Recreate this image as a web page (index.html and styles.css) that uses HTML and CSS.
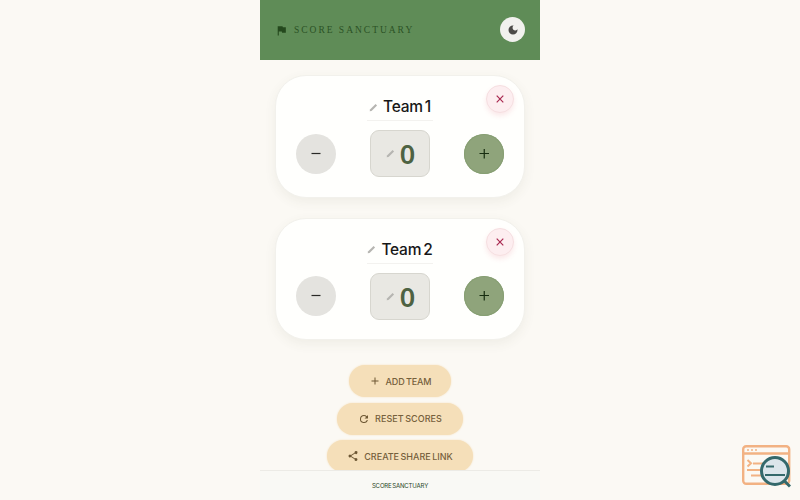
FILE: index.html
```
<!DOCTYPE html>
<html lang="en">
<head>
    <meta charset="UTF-8">
    <meta name="viewport" content="width=device-width, initial-scale=1.0">
    <title>Score Sanctuary</title>
    <link rel="stylesheet" href="styles.css">
</head>
<body>
<div class="app">
    <header class="header">
        <h1 class="brand">
            <svg class="brand-icon" viewBox="0 0 24 24"><path d="M14.4 6L14 4H5v17h2v-7h5.6l.4 2h7V6z"/></svg>
            <span>SCORE SANCTUARY</span>
        </h1>
        <button class="theme-toggle" aria-label="Dark mode">
            <svg viewBox="0 0 24 24"><path d="M12 3a9 9 0 1 0 9 9c0-.46-.04-.92-.1-1.36A5.4 5.4 0 1 1 13.360 3.100C12.920 3.040 12.460 3 12 3z"/></svg>
        </button>
    </header>

    <main class="main">
        <section class="card">
            <button class="remove" aria-label="Remove team">
                <svg viewBox="0 0 10 10"><path d="M1.700 1.700l6.600 6.600M8.300 1.700l-6.600 6.600"/></svg>
            </button>
            <div class="team">
                <svg class="pencil" viewBox="0 0 10 10"><path d="M.8 9.200l.3-2L7.300 1 9 2.700 2.800 8.900z"/></svg>
                <span>Team 1</span>
            </div>
            <div class="row">
                <button class="round minus" aria-label="Minus"><svg viewBox="0 0 12 12"><path d="M1.500 5.500h9"/></svg></button>
                <div class="score">
                    <svg class="pencil" viewBox="0 0 10 10"><path d="M.8 9.200l.3-2L7.300 1 9 2.700 2.800 8.900z"/></svg>
                    <span>0</span>
                </div>
                <button class="round plus" aria-label="Plus"><svg viewBox="0 0 12 12"><path d="M1.500 5.500h9.500M6.250 1v9.500"/></svg></button>
            </div>
        </section>

        <section class="card">
            <button class="remove" aria-label="Remove team">
                <svg viewBox="0 0 10 10"><path d="M1.700 1.700l6.600 6.600M8.300 1.700l-6.600 6.600"/></svg>
            </button>
            <div class="team">
                <svg class="pencil" viewBox="0 0 10 10"><path d="M.8 9.200l.3-2L7.300 1 9 2.700 2.800 8.900z"/></svg>
                <span>Team 2</span>
            </div>
            <div class="row">
                <button class="round minus" aria-label="Minus"><svg viewBox="0 0 12 12"><path d="M1.500 5.500h9"/></svg></button>
                <div class="score">
                    <svg class="pencil" viewBox="0 0 10 10"><path d="M.8 9.200l.3-2L7.300 1 9 2.700 2.800 8.900z"/></svg>
                    <span>0</span>
                </div>
                <button class="round plus" aria-label="Plus"><svg viewBox="0 0 12 12"><path d="M1.500 5.500h9.500M6.250 1v9.500"/></svg></button>
            </div>
        </section>

        <div class="actions">
            <button class="action add">
                <svg viewBox="0 0 24 24"><path d="M19 13h-6v6h-2v-6H5v-2h6V5h2v6h6z"/></svg>
                <span>ADD TEAM</span>
            </button>
            <button class="action reset">
                <svg viewBox="0 0 24 24"><path d="M17.650 6.350A7.960 7.960 0 0 0 12 4a8 8 0 1 0 7.730 10h-2.080A6 6 0 1 1 12 6c1.660 0 3.140.69 4.220 1.780L13 11h7V4z"/></svg>
                <span>RESET SCORES</span>
            </button>
            <button class="action share">
                <svg viewBox="0 0 24 24"><path d="M18 16.100c-.76 0-1.440.3-1.960.77L8.900 12.700a3.300 3.300 0 0 0 0-1.400l7.050-4.110A3 3 0 1 0 15 5c0 .24.040.47.090.7L8.040 9.810a3 3 0 1 0 0 4.380l7.120 4.160A2.920 2.920 0 1 0 18 16.100z"/></svg>
                <span>CREATE SHARE LINK</span>
            </button>
        </div>
    </main>

    <footer class="footer"><span>SCORE SANCTUARY</span></footer>
</div>

<!-- inspector badge -->
<svg class="badge" viewBox="0 0 50 44">
    <g fill="none" stroke="#f2b283" stroke-width="2.400">
        <rect x="2.200" y="2.200" width="46" height="37.500" rx="3"/>
        <path d="M2 9.500h46"/>
        <path d="M6 6h2M10 6h2M14 6h2" stroke-width="1.600"/>
        <path d="M6.500 16l3.500 3.200-3.500 3.200M12 19.500h10M6 26h14M10 31.500h11" stroke-width="2"/>
    </g>
    <circle cx="34" cy="27" r="13.500" fill="#dce6eb" stroke="#34696b" stroke-width="3"/>
    <path d="M25 22.500h8M24 31h20" stroke="#34696b" stroke-width="2.200"/>
    <path d="M43 36.500l6 6" stroke="#34696b" stroke-width="3"/>
</svg>
</body>
</html>
```
FILE: styles.css
```
* { box-sizing: border-box; }
body {
    margin: 0;
    height: 500px;
    overflow: hidden;
    background: #fbf9f4;
    font-family: Inter, "Open Sans", sans-serif;
    color: #171717;
}
button { border: 0; padding: 0; font: inherit; color: inherit; }
svg { display: block; flex: none; }

.app {
    width: 280px;
    height: 500px;
    margin: 0 auto;
    display: flex;
    flex-direction: column;
}

/* header */
.header {
    flex: none;
    height: 60px;
    padding: 0 15px 0 15px;
    display: flex;
    align-items: center;
    justify-content: space-between;
    background: #5f8c57;
}
.brand {
    margin: 0;
    display: flex;
    align-items: center;
    gap: 6px;
    font: 400 9.5px/12px "Liberation Serif", serif;
    letter-spacing: 1.98px;
    white-space: nowrap;
    color: #2b5225;
}
.brand-icon { width: 13px; height: 13px; fill: #24481d; }
.theme-toggle {
    width: 25px;
    height: 25px;
    margin-bottom: 1px;
    border-radius: 50%;
    background: #f1f1ee;
    display: flex;
    align-items: center;
    justify-content: center;
}
.theme-toggle svg { width: 12px; height: 12px; fill: #4b4a48; }

/* team cards */
.main {
    flex: 1;
    min-height: 0;
    overflow: hidden;
    padding: 15px 15px 0;
}
.card {
    position: relative;
    height: 122.5px;
    margin-bottom: 20px;
    padding: 20px 20px 0;
    border: 1px solid #f2f1ec;
    border-radius: 31px;
    background: #fffffd;
    box-shadow: 0 4px 12px rgba(90, 85, 50, .07);
}
.remove {
    position: absolute;
    top: 9px;
    right: 10px;
    width: 28px;
    height: 28px;
    border: 1px solid #f6dfe1;
    border-radius: 50%;
    background: #fdeef0;
    box-shadow: 0 3px 5px rgba(230, 100, 120, .14);
    display: flex;
    align-items: center;
    justify-content: center;
}
.remove svg { width: 10px; height: 10px; fill: none; stroke: #a92850; stroke-width: 1.2; }
.team {
    width: 66px;
    height: 25px;
    margin: 0 auto 9px;
    padding-bottom: 2px;
    border-bottom: 1px solid #f3f2ef;
    display: flex;
    align-items: center;
    justify-content: center;
    gap: 5px;
    font-size: 15.5px;
    font-weight: 500;
    line-height: 20px;
    letter-spacing: -.25px;
    word-spacing: -1.8px;
    white-space: nowrap;
}
.pencil { width: 9px; height: 9px; fill: #b6b5b1; }
.row {
    display: flex;
    align-items: center;
    justify-content: space-between;
}
.round {
    width: 40px;
    height: 40px;
    border-radius: 50%;
    display: flex;
    align-items: center;
    justify-content: center;
}
.round svg { width: 12px; height: 12px; fill: none; stroke-width: 1.2; }
.minus { background: #e4e3df; }
.minus svg { stroke: #292926; }
.plus { background: #8fa47b; box-shadow: inset 0 0 0 1px #879f73; }
.plus svg { stroke: #172d10; }
.score {
    width: 60px;
    height: 47px;
    padding-left: 1px;
    border: 1px solid #d7d6cf;
    border-radius: 9px;
    background: #e9e8e3;
    display: flex;
    align-items: center;
    justify-content: center;
    gap: 5px;
    font: 600 27px/45px "Noto Sans", sans-serif;
    color: #4e6242;
}

/* action buttons */
.actions {
    padding-top: 5px;
    display: flex;
    flex-direction: column;
    align-items: center;
    gap: 5.5px;
}
.action {
    height: 32px;
    border-radius: 16px;
    background: #f5dfb9;
    box-shadow: 0 0 2px #f5dfb9;
    display: flex;
    align-items: center;
    justify-content: center;
    gap: 5px;
    font-size: 9px;
    font-weight: 500;
    word-spacing: -.9px;
    white-space: nowrap;
    color: #75603c;
}
.action svg { width: 12px; height: 12px; fill: #6d5733; }
.add { width: 102px; letter-spacing: -.1px; }
.reset { width: 126px; letter-spacing: .05px; }
.share { width: 146px; }

.footer {
    flex: none;
    height: 30px;
    border-top: 1px solid #ecebe6;
    background: #f9f9f5;
    display: flex;
    align-items: center;
    justify-content: center;
    font-size: 6px;
    letter-spacing: -.12px;
    word-spacing: -1px;
    color: #29451f;
}

.badge {
    position: absolute;
    left: 741px;
    top: 444px;
    width: 50px;
    height: 44px;
}
```
